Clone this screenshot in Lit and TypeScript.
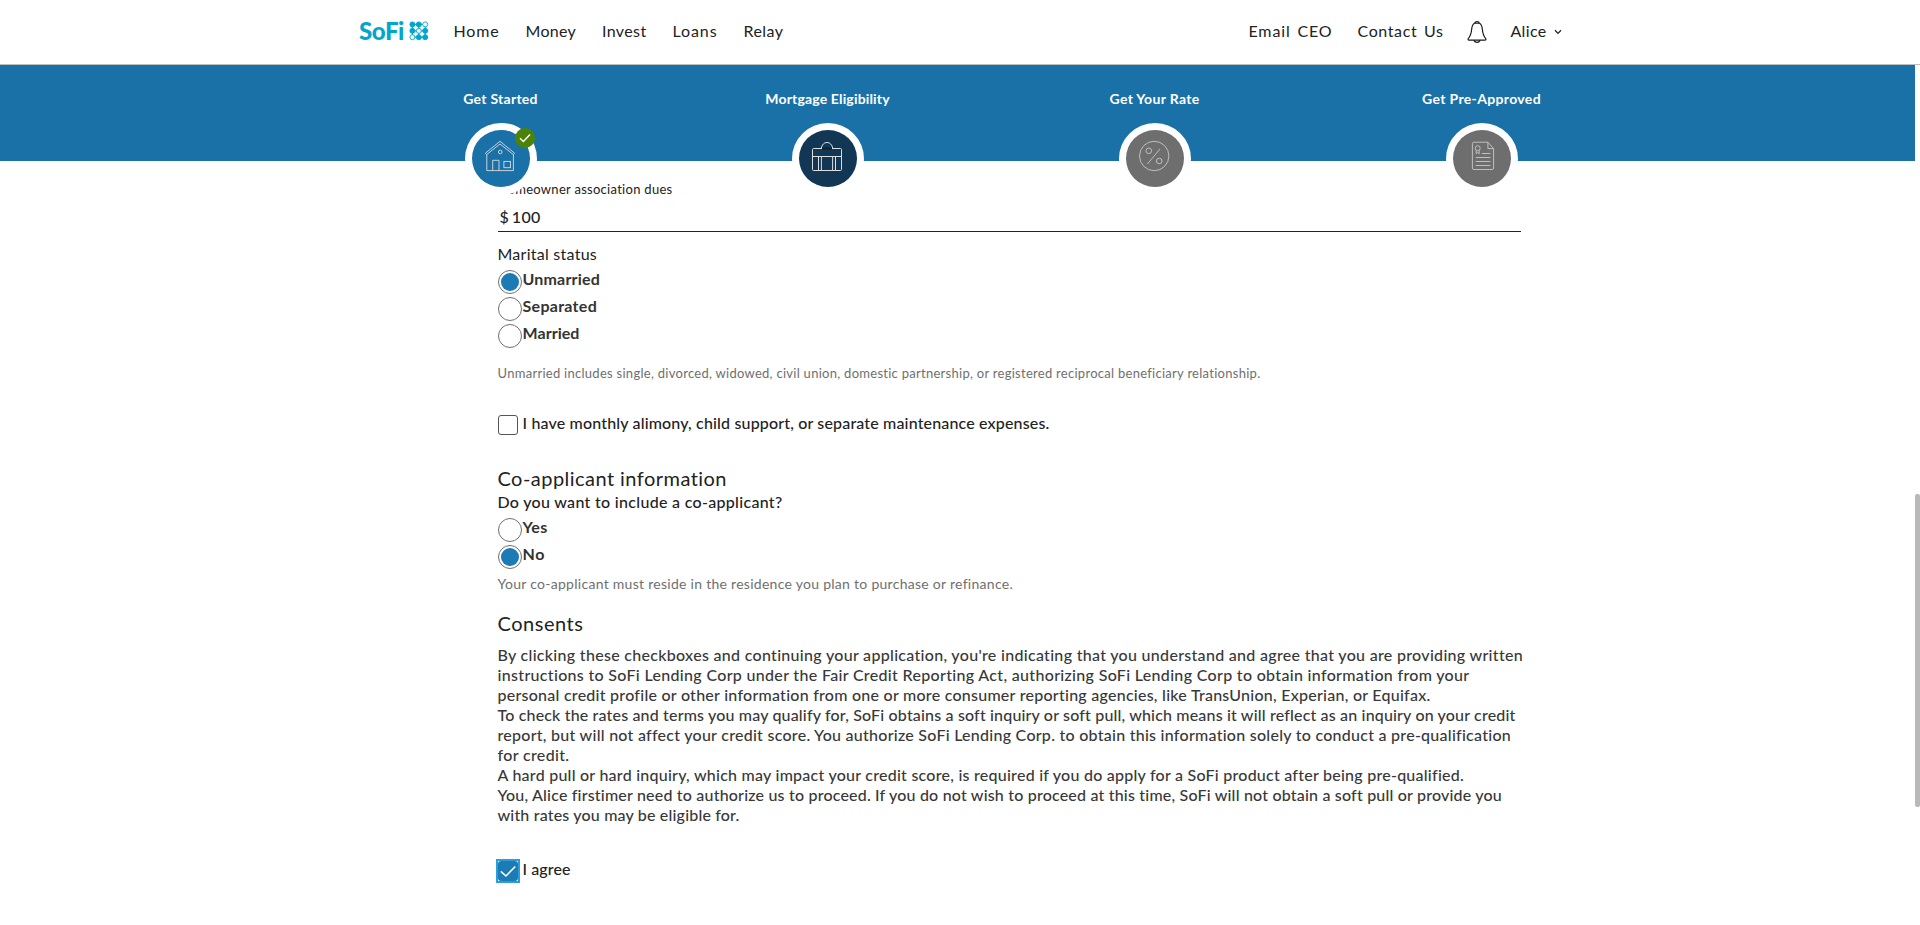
import { LitElement, html, css, svg } from "lit";
import { customElement, property } from "lit/decorators.js";
import { classMap } from "lit/directives/class-map.js";

/** One line of text whose tracking is adjusted so it spans the given width. */
@customElement("tracked-text")
class TrackedText extends LitElement {
  static styles = css`
    :host { display: inline-block; white-space: nowrap; font-variant-ligatures: none; }
  `;
  @property() text = "";
  @property({ type: Number }) width = 0;

  render() {
    return html`<span>${this.text}</span>`;
  }

  updated() {
    const span = this.renderRoot.querySelector("span")!;
    span.style.letterSpacing = "0";
    const natural = span.getBoundingClientRect().width;
    span.style.letterSpacing = `${(this.width - natural) / this.text.length}px`;
  }
}

const t = (text: string, width: number) =>
  html`<tracked-text .text=${text} .width=${width}></tracked-text>`;

const houseIcon = svg`
  <path d="M13.4 23.2 28 11.3 42.6 23.2 41.3 24.6 28 14 14.7 24.6Z"/>
  <path d="M14.8 24.6V40.6H41.4V24.6"/>
  <path d="M20.7 40.6V30.3H27V40.6"/>
  <rect x="31.9" y="31.4" width="6.5" height="6.3"/>
  <circle cx="28.2" cy="22" r="1.8"/>`;

const briefcaseIcon = svg`
  <rect x="13.5" y="18.5" width="29" height="22" rx="1"/>
  <path d="M13.5 26.5H42.5M19.5 26.5V40.5M22.4 26.5V40.5M33.6 26.5V40.5M36.5 26.5V40.5"/>
  <path d="M22.2 18.5C23 14.5 25.2 12.5 28 12.5S33 14.5 33.8 18.5"/>
  <path class="shade" d="M23 18.5H33"/>`;

const percentIcon = svg`
  <circle cx="28.2" cy="26" r="14.7"/>
  <circle cx="22.8" cy="20.8" r="2.8"/>
  <circle cx="33.2" cy="31" r="2.8"/>
  <path d="M34 19 21.4 34"/>`;

const documentIcon = svg`
  <g transform="translate(.9 0)">
    <path d="M34 12.2H20Q18.5 12.2 18.5 13.7V38Q18.5 39.5 20 39.5H38.2Q39.7 39.5 39.7 38V18.6L34 12.2V18.6H39.7"/>
    <circle cx="23.8" cy="18.2" r="2.5"/>
    <path d="M22.3 20.5V23.7L23.8 22.6 25.3 23.7V20.5"/>
    <path d="M28 23.5H36.5M21.8 27.5H36.5M21.8 31.5H36.5M21.8 35.5H36.5"/>
  </g>`;

const STEPS = [
  { label: "Get Started", width: 74.5, state: "done", icon: houseIcon },
  { label: "Mortgage Eligibility", width: 124.5, state: "current", icon: briefcaseIcon },
  { label: "Get Your Rate", width: 90, state: "todo", icon: percentIcon },
  { label: "Get Pre-Approved", width: 119, state: "todo", icon: documentIcon },
];

const NAV: [string, number][] = [
  ["Home", 46], ["Money", 50.5], ["Invest", 44.5], ["Loans", 45], ["Relay", 40],
];

const CONSENT: [string, number][] = [
  ["By clicking these checkboxes and continuing your application, you're indicating that you understand and agree that you are providing written", 1025.5],
  ["instructions to SoFi Lending Corp under the Fair Credit Reporting Act, authorizing SoFi Lending Corp to obtain information from your", 972],
  ["personal credit profile or other information from one or more consumer reporting agencies, like TransUnion, Experian, or Equifax.", 933],
  ["To check the rates and terms you may qualify for, SoFi obtains a soft inquiry or soft pull, which means it will reflect as an inquiry on your credit", 1018],
  ["report, but will not affect your credit score. You authorize SoFi Lending Corp. to obtain this information solely to conduct a pre-qualification", 1013.5],
  ["for credit.", 72],
  ["A hard pull or hard inquiry, which may impact your credit score, is required if you do apply for a SoFi product after being pre-qualified.", 966.5],
  ["You, Alice firstimer need to authorize us to proceed. If you do not wish to proceed at this time, SoFi will not obtain a soft pull or provide you", 1004.5],
  ["with rates you may be eligible for.", 242],
];

@customElement("app-header")
class AppHeader extends LitElement {
  static styles = css`
    :host { display: block; box-sizing: border-box; height: 65px; border-bottom: 1px solid #bdbdbd; background: #fff; }
    .bar { display: flex; align-items: center; height: 62px; padding-left: 359px; font-size: 16px; line-height: 20px; color: #222; word-spacing: 2px; }
    .logo { display: flex; align-items: center; gap: 4.5px; width: 94.5px; color: #00a6cc; }
    .word { font-size: 24px; font-weight: 900; line-height: 24px; }
    .logo svg { fill: #00a6cc; stroke: #00a6cc; }
    .logo .open { fill: #fff; }
    nav { display: flex; gap: 26px; width: 795px; }
    .right { display: flex; align-items: center; gap: 25px; }
    .bell { fill: none; stroke: #1a1a1a; stroke-width: 1.2; margin: 2px -1px 0 -2px; }
    .user { display: flex; align-items: center; gap: 7px; }
    .chev { fill: none; stroke: #222; stroke-width: 1.3; margin-top: 2px; }
  `;

  render() {
    const centers = [3.4, 9.8, 16.2];
    const open = new Set(["2,0", "1,1", "0,2"]);
    return html`
      <div class="bar">
        <div class="logo">
          <span class="word">${t("SoFi", 45)}</span>
          <svg width="20" height="20" viewBox="0 0 20 20">
            <path d="M3.4 3.4H16.2V16.2H3.4ZM9.8 3.4V16.2M3.4 9.8H16.2" fill="none" stroke-width="1.2"/>
            ${centers.map((y, r) => centers.map((x, c) => svg`
              <circle class=${open.has(`${c},${r}`) ? "open" : "solid"} cx=${x} cy=${y} r="2.5" stroke-width=".9"/>`))}
          </svg>
        </div>
        <nav>${NAV.map(([label, width]) => t(label, width))}</nav>
        <div class="right">
          ${t("Email CEO", 84)}
          ${t("Contact Us", 86)}
          <svg class="bell" width="20" height="24" viewBox="0 0 20 24">
            <path d="M7.6 3.2C5.6 4 5 6 4.7 9C4.3 13.5 3.6 16 1.2 18.6Q.8 20.2 2 20.2H18Q19.2 20.2 18.8 18.6C16.4 16 15.7 13.5 15.3 9C15 6 14.4 4 12.4 3.2Z"/>
            <path d="M8 3.2Q8 1.5 10 1.5T12 3.2M6.8 20.4Q8 22.3 10 22.3T13.2 20.4"/>
          </svg>
          <span class="user">${t("Alice", 36)}
            <svg class="chev" width="8" height="6" viewBox="0 0 8 6"><path d="M1 1.3 4 4.4 7 1.3"/></svg>
          </span>
        </div>
      </div>`;
  }
}

@customElement("app-steps")
class AppSteps extends LitElement {
  static styles = css`
    :host { display: block; height: 96px; margin-right: 5px; background: #1971a8; position: relative; z-index: 1; }
    .steps { display: grid; grid-template-columns: repeat(4, 327px); padding: 24px 0 0 337px; }
    .step { display: flex; flex-direction: column; align-items: center; gap: 14px; color: #fff; font-size: 14px; font-weight: 700; line-height: 20px; }
    .dot { position: relative; box-sizing: border-box; width: 72px; height: 72px; border: 7px solid #fff; border-radius: 50%; background: #fff; }
    .disc { display: block; width: 58px; height: 57px; border-radius: 50%; fill: none; stroke: #ddd; stroke-width: .9; }
    .done { background: #1971a8; }
    .current { background: #113755; stroke-width: 1; }
    .todo { background: #6e6e6e; stroke: #c8c8c8; }
    .shade { stroke: #0a2033; stroke-width: 2; }
    .badge { position: absolute; right: -5px; top: -2px; fill: #4c8206; stroke: none; }
    .badge path { fill: none; stroke: #fff; stroke-width: 1.4; }
  `;

  render() {
    return html`<div class="steps">${STEPS.map((s) => html`
      <div class="step">
        ${t(s.label, s.width)}
        <div class="dot">
          <svg class=${classMap({ disc: true, [s.state]: true })} viewBox="0 0 58 57">${s.icon}</svg>
          ${s.state === "done" ? html`
            <svg class="badge" width="20" height="20" viewBox="0 0 20 20">
              <circle cx="10" cy="10" r="10"/><path d="M5 10.3 8.4 13.6 15 6.6"/>
            </svg>` : ""}
        </div>
      </div>`)}</div>`;
  }
}

@customElement("app-root")
class AppRoot extends LitElement {
  static styles = css`
    :host { display: block; position: relative; height: 925px; overflow: hidden; background: #fff; font-family: Lato, "Open Sans", sans-serif; color: #222; }
    main { display: flex; flex-direction: column; align-items: flex-start; width: 1023px; padding: 20px 0 0 498px; font-size: 16px; line-height: 20px; font-weight: 500; }
    tracked-text { margin-left: -0.5px; }
    .small { font-size: 13px; line-height: 16px; font-weight: 400; }
    .field { display: flex; gap: 3.5px; box-sizing: border-box; width: 1023px; margin-top: 10px; padding: 0 0 4px 1.5px; border-bottom: 1px solid #222; }
    .marital { margin-top: 12px; font-weight: 400; }
    .radios { display: flex; flex-direction: column; gap: 3px; margin-top: 6px; }
    .radios.co { margin-top: 5px; }
    .option { display: flex; align-items: center; gap: 1px; height: 24px; font-weight: 700; color: #333; }
    .option tracked-text { padding-bottom: 6px; }
    .ring { box-sizing: border-box; width: 24px; height: 24px; padding: 2px; border: 1px solid #6f6f6f; border-radius: 50%; background: #fff content-box; }
    .ring.on { background-color: #1b7bb5; }
    .hint { color: #6f6f6f; line-height: 16px; font-weight: 400; }
    .hint.marry { font-size: 13px; margin-top: 17px; }
    .hint.reside { font-size: 14px; margin-top: 7px; }
    .check { display: flex; align-items: center; gap: 5px; margin-top: 34px; height: 20px; }
    .check tracked-text { padding-bottom: 4px; }
    .box { box-sizing: border-box; width: 20px; height: 20px; border: 1px solid #555; border-radius: 3px; }
    h2 { margin: 31px 0 0; font-size: 20px; line-height: 24px; font-weight: 400; }
    h2.consents { margin-top: 19px; }
    .question { margin-top: 2px; padding-bottom: 1px; }
    .consent { display: flex; flex-direction: column; align-items: flex-start; margin-top: 10px; color: #383838; }
    .check.agree { margin: 34px 0 0 -2px; height: 24px; gap: 3px; }
    .box.on { display: grid; width: 24px; height: 24px; border: 2px solid #2a9ddb; border-radius: 0; background: #fff; }
    .box.on svg { display: block; border-radius: 3px; background: #1b7bb5; fill: none; stroke: #fff; stroke-width: 1.6; }
    .scroll { position: absolute; right: 0; top: 494px; width: 5px; height: 313px; border-radius: 2px; background: #b9b9b7; }
  `;

  private option(label: string, width: number, on = false) {
    return html`<div class="option"><span class=${classMap({ ring: true, on })}></span>${t(label, width)}</div>`;
  }

  render() {
    return html`
      <app-header></app-header>
      <app-steps></app-steps>
      <main>
        <div class="small">${t("Homeowner association dues", 175)}</div>
        <div class="field"><span>$</span>${t("100", 29)}</div>
        <div class="marital">${t("Marital status", 99.5)}</div>
        <div class="radios">
          ${this.option("Unmarried", 77.5, true)}
          ${this.option("Separated", 74.5)}
          ${this.option("Married", 57)}
        </div>
        <div class="hint marry">${t("Unmarried includes single, divorced, widowed, civil union, domestic partnership, or registered reciprocal beneficiary relationship.", 763)}</div>
        <div class="check"><span class="box"></span>${t("I have monthly alimony, child support, or separate maintenance expenses.", 527)}</div>
        <h2>${t("Co-applicant information", 229.5)}</h2>
        <div class="question">${t("Do you want to include a co-applicant?", 285)}</div>
        <div class="radios co">
          ${this.option("Yes", 25)}
          ${this.option("No", 22.5, true)}
        </div>
        <div class="hint reside">${t("Your co-applicant must reside in the residence you plan to purchase or refinance.", 515.5)}</div>
        <h2 class="consents">${t("Consents", 86)}</h2>
        <div class="consent">${CONSENT.map(([line, width]) => t(line, width))}</div>
        <div class="check agree">
          <span class="box on"><svg width="20" height="20" viewBox="0 0 20 20"><path d="M2.8 10.3 8 15 17.3 5.5"/></svg></span>
          ${t("I agree", 48)}
        </div>
      </main>
      <div class="scroll"></div>`;
  }
}
